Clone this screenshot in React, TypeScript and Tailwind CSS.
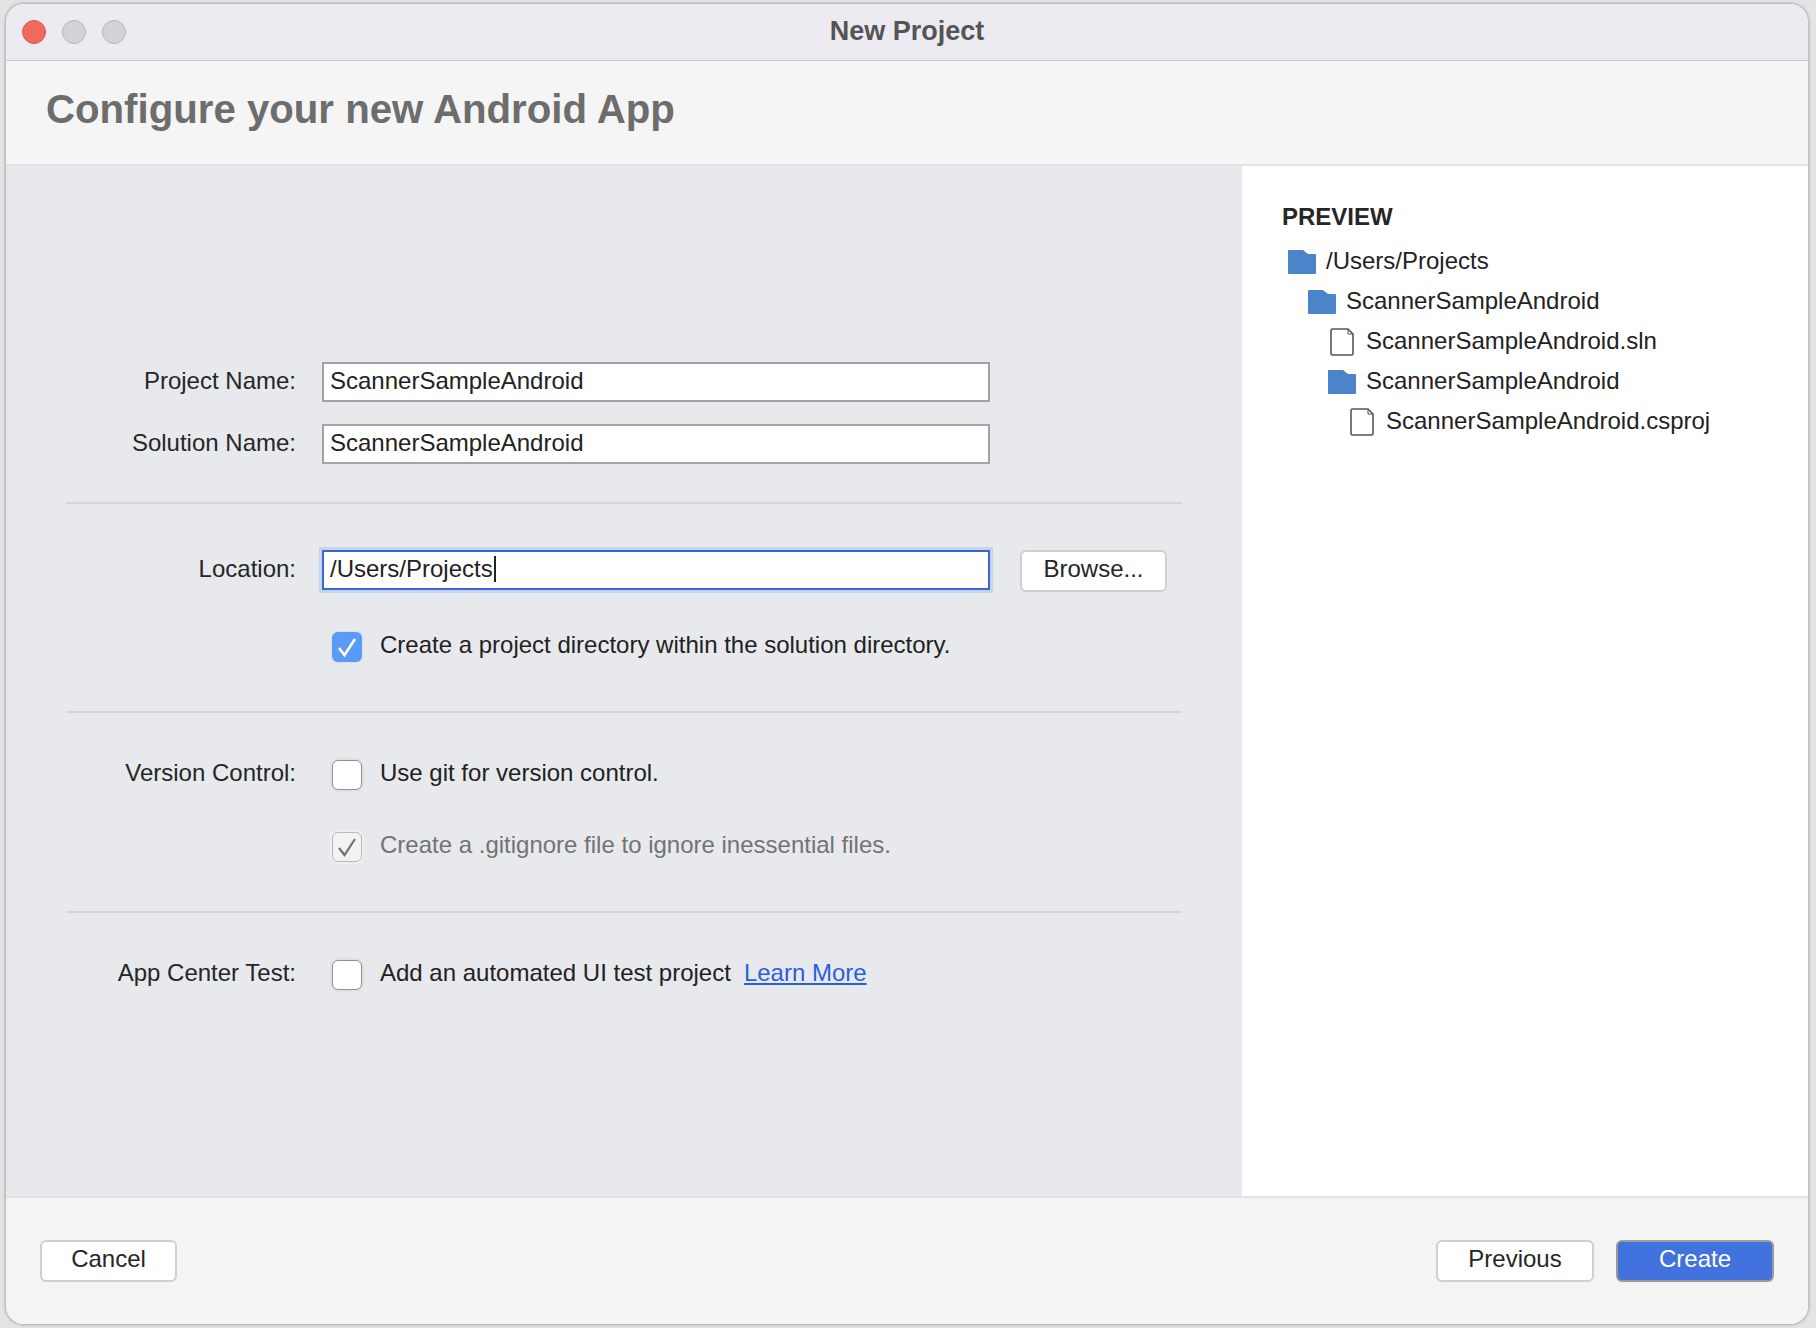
import type { ReactNode } from 'react';

const FONT = "font-['Liberation_Sans',Arial,sans-serif]";

function FolderIcon() {
  return (
    <svg width="28" height="24" viewBox="0 0 28 24" className="shrink-0">
      <path d="M0 1a1 1 0 0 1 1-1h14l5 4h7a1 1 0 0 1 1 1v18a1 1 0 0 1-1 1H1a1 1 0 0 1-1-1z" fill="#4b84c8" />
    </svg>
  );
}

function FileIcon() {
  return (
    <svg width="24" height="28" viewBox="0 0 24 28" className="shrink-0">
      <path d="M1 2.500a1.500 1.500 0 0 1 1.500-1.500H18l5 5v19.500a1.500 1.500 0 0 1-1.500 1.500h-19A1.500 1.500 0 0 1 1 25.500z" fill="#fff" stroke="#555" strokeWidth="1.6" />
      <path d="M18 1v5h5" fill="none" stroke="#555" strokeWidth="1" />
    </svg>
  );
}

function Field({ label, value, focused }: { label: string; value: string; focused?: boolean }) {
  return (
    <div className="flex items-center">
      <label className="-mt-0.5 w-[230px] text-right text-2xl leading-[30px] text-[#262626]">{label}</label>
      <div
        className={`ml-[26px] flex h-10 w-[668px] items-center bg-white px-[6px] pb-0.5 text-2xl leading-[30px] text-[#222] ${
          focused
            ? 'border-2 border-[#3565d8] shadow-[0_0_0_3px_#c9d4ec]'
            : 'border-2 border-[#a3a3a3]'
        }`}
      >
        {value}
        {focused && <span className="ml-px h-[26px] w-0.5 bg-[#222]" />}
      </div>
    </div>
  );
}

function Checkbox({ state }: { state: 'on' | 'off' | 'disabled' }) {
  if (state === 'on') {
    return (
      <span className="flex h-[30px] w-[30px] shrink-0 items-center justify-center rounded-[6px] bg-[#5a9bf5] shadow-[0_0_0_1px_#d5dfee]">
        <svg width="22" height="22" viewBox="0 0 22 22">
          <path d="M3 12l5.500 7L19 3" fill="none" stroke="#fff" strokeWidth="2.600" />
        </svg>
      </span>
    );
  }
  if (state === 'disabled') {
    return (
      <span className="flex h-[30px] w-[30px] shrink-0 items-center justify-center rounded-[6px] border border-[#b9b9b9] bg-[#f3f3f3] shadow-[0_0_0_2px_#eeeff2]">
        <svg width="22" height="22" viewBox="0 0 22 22">
          <path d="M3 12l5.500 7L19 3" fill="none" stroke="#707070" strokeWidth="2.200" />
        </svg>
      </span>
    );
  }
  return (
    <span className="h-[30px] w-[30px] shrink-0 rounded-[6px] border border-[#8f8f8f] bg-white shadow-[0_0_0_2px_#dfe1e5]" />
  );
}

function CheckRow({ label, state, children }: { label?: string; state: 'on' | 'off' | 'disabled'; children: ReactNode }) {
  return (
    <div className="flex h-[30px] items-center">
      <span className="-mt-1 w-[230px] text-right text-2xl leading-[30px] text-[#262626]">{label}</span>
      <span className="ml-9 flex items-center gap-[18px]">
        <Checkbox state={state} />
        <span className={`-mt-1 text-2xl leading-[30px] ${state === 'disabled' ? 'text-[#737373]' : 'text-[#222]'}`}>{children}</span>
      </span>
    </div>
  );
}

function Button({ children, className }: { children: ReactNode; className: string }) {
  return (
    <button className={`h-[42px] rounded-[6px] border-2 pb-1 text-2xl leading-[30px] ${className}`}>
      {children}
    </button>
  );
}

const previewRows = [
  { name: '/Users/Projects', indent: 'pl-[6px]', gap: 'gap-[10px]', folder: true },
  { name: 'ScannerSampleAndroid', indent: 'pl-[26px]', gap: 'gap-[10px]', folder: true },
  { name: 'ScannerSampleAndroid.sln', indent: 'pl-[48px]', gap: 'gap-3', folder: false },
  { name: 'ScannerSampleAndroid', indent: 'pl-[46px]', gap: 'gap-[10px]', folder: true },
  { name: 'ScannerSampleAndroid.csproj', indent: 'pl-[68px]', gap: 'gap-3', folder: false },
];

export default function App() {
  return (
    <div className={`h-[1328px] w-[1816px] bg-[#e4e4e4] pb-1 pl-1.5 pr-2 pt-1 ${FONT}`}>
      <div className="flex h-full flex-col overflow-hidden rounded-[18px] bg-[#f5f5f5] shadow-[0_0_3px_1px_#a8a8a8]">
        {/* Title bar */}
        <div className="relative flex h-[57px] shrink-0 items-center justify-center border-b border-[#cdcbd1] bg-[#edebf1]">
          <div className="absolute left-[16px] top-[16px] flex gap-4">
            <span className="h-6 w-6 rounded-full border border-[#db5a50] bg-[#f06a60]" />
            <span className="h-6 w-6 rounded-full border border-[#b8b6bc] bg-[#d4d2d8]" />
            <span className="h-6 w-6 rounded-full border border-[#b8b6bc] bg-[#d4d2d8]" />
          </div>
          <span className="-mt-0.5 text-[27px] font-bold leading-8 text-[#555]">New Project</span>
        </div>

        {/* Header */}
        <div className="flex h-[105px] shrink-0 items-center border-b-2 border-[#e2e3e6] bg-[#f5f5f5] pb-1.5 pl-10">
          <h1 className="text-[40.2px] font-bold leading-[48px] text-[#6d6d6d]">Configure your new Android App</h1>
        </div>

        {/* Body */}
        <div className="flex min-h-0 flex-1">
          <div className="w-[1236px] shrink-0 bg-[#e7e9ed] px-[60px] pt-[196px]">
            <div className="w-[1116px]">
              <div className="flex flex-col gap-[22px]">
                <Field label="Project Name:" value="ScannerSampleAndroid" />
                <Field label="Solution Name:" value="ScannerSampleAndroid" />
              </div>
              <div className="mb-[46px] mt-[38px] border-t-2 border-[#d5d6da]" />
              <div className="flex items-start">
                <Field label="Location:" value="/Users/Projects" focused />
                <Button className="ml-[30px] w-[147px] border-[#cfcfcf] bg-white text-[#262626]">Browse...</Button>
              </div>
              <div className="mt-[40px]">
                <CheckRow state="on">Create a project directory within the solution directory.</CheckRow>
              </div>
              <div className="mb-[47px] mt-[49px] border-t-2 border-[#d5d6da]" />
              <CheckRow label="Version Control:" state="off">Use git for version control.</CheckRow>
              <div className="mt-[42px]">
                <CheckRow state="disabled">Create a .gitignore file to ignore inessential files.</CheckRow>
              </div>
              <div className="mb-[47px] mt-[49px] border-t-2 border-[#d5d6da]" />
              <CheckRow label="App Center Test:" state="off">
                Add an automated UI test project
                <a className="ml-[13px] text-[#2a5fdc] underline">Learn More</a>
              </CheckRow>
            </div>
          </div>

          {/* Preview */}
          <aside className="flex-1 bg-white pl-[40px] pt-[35px]">
            <h2 className="text-2xl font-bold leading-[32px] text-[#262626]">PREVIEW</h2>
            <ul className="mt-[9px]">
              {previewRows.map((row) => (
                <li key={row.name + row.indent} className={`flex h-10 items-center text-2xl text-[#222] ${row.indent} ${row.gap}`}>
                  {row.folder ? <FolderIcon /> : <FileIcon />}
                  <span className="-mt-0.5 leading-[30px]">{row.name}</span>
                </li>
              ))}
            </ul>
          </aside>
        </div>

        {/* Footer */}
        <div className="flex h-[128px] shrink-0 items-start justify-between border-t-2 border-[#e2e3e6] bg-[#f4f4f4] px-[34px] pt-[42px]">
          <Button className="w-[137px] border-[#cfcfcf] bg-white text-[#262626]">Cancel</Button>
          <div className="flex gap-[22px]">
            <Button className="w-[158px] border-[#cfcfcf] bg-white text-[#262626]">Previous</Button>
            <Button className="w-[158px] border-[#9a9a9a] bg-[#4272de] text-white">Create</Button>
          </div>
        </div>
      </div>
    </div>
  );
}
